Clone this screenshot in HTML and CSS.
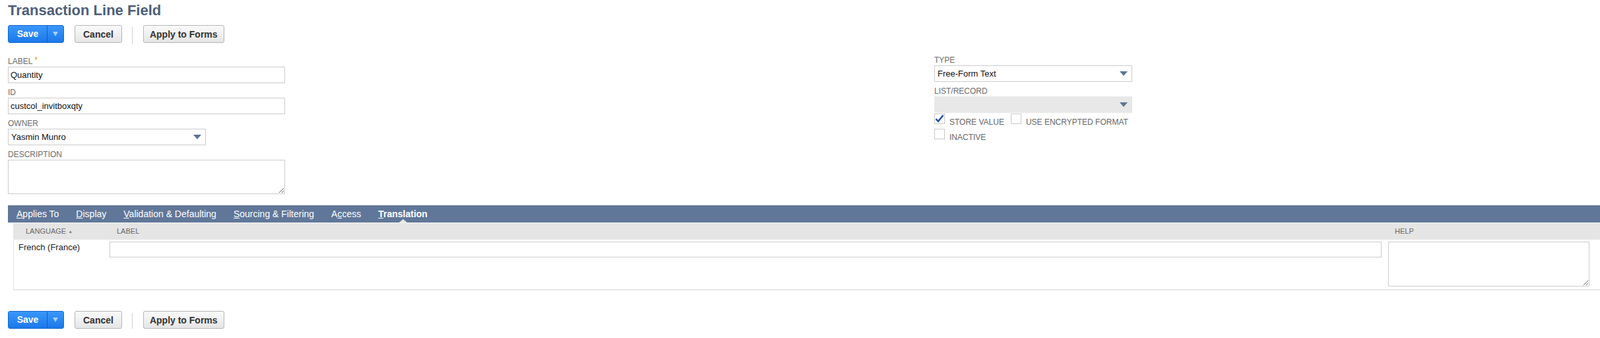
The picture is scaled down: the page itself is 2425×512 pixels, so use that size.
FILE: index.html
```html
<!DOCTYPE html>
<html lang="en">
<head>
  <meta charset="UTF-8">
  <title>Transaction Line Field</title>
  <link rel="stylesheet" href="styles.css">
</head>
<body>
  <div class="page">
    <h1 class="title">Transaction Line Field</h1>

    <div class="actions">
      <div class="btn-save">
        <span class="save-main">Save</span>
        <span class="save-menu"><i class="tri-light"></i></span>
      </div>
      <button class="btn">Cancel</button>
      <span class="sep"></span>
      <button class="btn btn-wide">Apply to Forms</button>
    </div>

    <div class="form">
      <div class="col col-left">
        <div class="field">
          <label>LABEL <span class="req">*</span></label>
          <input type="text" class="text-input wide" value="Quantity">
        </div>
        <div class="field">
          <label>ID</label>
          <input type="text" class="text-input wide" value="custcol_invitboxqty">
        </div>
        <div class="field">
          <label>OWNER</label>
          <div class="select narrow"><span>Yasmin Munro</span><i class="tri"></i></div>
        </div>
        <div class="field">
          <label>DESCRIPTION</label>
          <textarea class="text-area wide"></textarea>
        </div>
      </div>

      <div class="col col-right">
        <div class="field">
          <label>TYPE</label>
          <div class="select narrow"><span>Free-Form Text</span><i class="tri"></i></div>
        </div>
        <div class="field field-tight">
          <label>LIST/RECORD</label>
          <div class="select narrow disabled"><span></span><i class="tri"></i></div>
        </div>
        <div class="check-row">
          <span class="box">
            <svg width="16" height="16" viewBox="0 0 16 16"><path d="M2.5 8.2 L6 11.8 L13.5 2.5" fill="none" stroke="#22559a" stroke-width="2.6"/></svg>
          </span>
          <span class="check-text">STORE VALUE</span>
          <span class="box box-gap"></span>
          <span class="check-text">USE ENCRYPTED FORMAT</span>
        </div>
        <div class="check-row second">
          <span class="box"></span>
          <span class="check-text">INACTIVE</span>
        </div>
      </div>
    </div>

    <div class="tabs">
      <span class="tab"><u>A</u>pplies To</span>
      <span class="tab"><u>D</u>isplay</span>
      <span class="tab"><u>V</u>alidation &amp; Defaulting</span>
      <span class="tab"><u>S</u>ourcing &amp; Filtering</span>
      <span class="tab">A<u>c</u>cess</span>
      <span class="tab active"><u>T</u>ranslation</span>
    </div>

    <div class="sublist">
      <div class="grid head">
        <div class="h-lang">LANGUAGE <span class="sort">&#9650;</span></div>
        <div class="h-label">LABEL</div>
        <div class="h-help">HELP</div>
      </div>
      <div class="grid row">
        <div class="lang">French (France)</div>
        <input type="text" class="text-input cell-input">
        <textarea class="text-area cell-area"></textarea>
      </div>
    </div>

    <div class="actions actions-bottom">
      <div class="btn-save">
        <span class="save-main">Save</span>
        <span class="save-menu"><i class="tri-light"></i></span>
      </div>
      <button class="btn">Cancel</button>
      <span class="sep"></span>
      <button class="btn btn-wide">Apply to Forms</button>
    </div>
  </div>
</body>
</html>
```

FILE: styles.css
```css
body {
  margin: 0;
  font-family: "Liberation Sans", Arial, sans-serif;
  background-color: #fff;
  color: #222;
}
.page {
  padding-left: 12px;
}
.title {
  margin: 0;
  padding-top: 3px;
  font-size: 22px;
  line-height: 26px;
  font-weight: bold;
  color: #4d5f79;
}

/* buttons */
.actions {
  display: flex;
  align-items: center;
  margin-top: 9px;
  height: 27px;
}
.actions-bottom {
  margin-top: 31px;
}
.btn-save {
  display: flex;
  height: 27px;
  box-sizing: border-box;
  border: 1px solid #1467cc;
  border-radius: 3px;
  background: linear-gradient(#3a97fa, #1b78ea);
  color: #fff;
  font-weight: bold;
  font-size: 14px;
}
.save-main {
  width: 58px;
  line-height: 25px;
  text-align: center;
  border-right: 1px solid #1462c2;
}
.save-menu {
  width: 24px;
  display: flex;
  align-items: center;
  justify-content: center;
}
.tri-light {
  width: 0;
  height: 0;
  border-left: 4px solid transparent;
  border-right: 4px solid transparent;
  border-top: 7px solid #a9cdf7;
}
.btn {
  height: 27px;
  margin-left: 16px;
  padding: 0 12px;
  font-family: inherit;
  font-size: 14px;
  font-weight: bold;
  color: #333;
  background: linear-gradient(#fafafa, #e5e5e5);
  border: 1px solid #b5b5b5;
  border-radius: 3px;
}
.btn-wide {
  margin-left: 16px;
  padding: 0 9px;
}
.sep {
  width: 1px;
  height: 25px;
  margin-left: 15px;
  margin-top: 3px;
  background-color: #cfcfcf;
}

/* main form */
.form {
  display: flex;
  margin-top: 19px;
}
.col-left {
  width: 1404px;
  padding-top: 2px;
}
.field {
  margin-bottom: 7px;
}
.col-left .field:last-child {
  margin-bottom: 0;
}
.field-tight {
  margin-bottom: 1px;
}
.field label {
  display: block;
  font-size: 12px;
  line-height: 14px;
  color: #6b6b6b;
  margin-bottom: 1px;
}
.req {
  color: #d9962a;
  position: relative;
  top: -2px;
}
.text-input {
  display: block;
  box-sizing: border-box;
  height: 25px;
  border: 1px solid #cccccc;
  padding: 0 3px;
  font-family: inherit;
  font-size: 13px;
  color: #111;
  outline: none;
}
.wide {
  width: 420px;
}
.text-area {
  display: block;
  box-sizing: border-box;
  border: 1px solid #cccccc;
  font-family: inherit;
  font-size: 13px;
  outline: none;
  margin: 0;
}
.col-left .text-area {
  height: 52px;
}
.select {
  box-sizing: border-box;
  height: 25px;
  border: 1px solid #cccccc;
  display: flex;
  align-items: center;
  justify-content: space-between;
  padding: 0 6px 0 4px;
  font-size: 13px;
  color: #111;
}
.narrow {
  width: 300px;
}
.select.disabled {
  background-color: #e8e8e8;
  border-color: #e8e8e8;
}
.tri {
  width: 0;
  height: 0;
  border-left: 6px solid transparent;
  border-right: 6px solid transparent;
  border-top: 7px solid #5c7697;
}

/* checkboxes */
.check-row {
  display: flex;
  align-items: flex-start;
  height: 17px;
}
.check-row.second {
  margin-top: 6px;
}
.box {
  width: 16px;
  height: 16px;
  box-sizing: border-box;
  border: 1px solid #c9c9c9;
  background: #fff;
  position: relative;
}
.box svg {
  position: absolute;
  left: -1px;
  top: -1px;
}
.box-gap {
  margin-left: 10px;
}
.check-text {
  padding-top: 6px;
  padding-left: 7px;
  font-size: 12px;
  line-height: 14px;
  color: #666;
}

/* tabs */
.tabs {
  display: flex;
  margin-top: 17px;
  height: 26px;
  background-color: #607799;
  border-bottom: 1px solid #f2f2f2;
}
.tab {
  position: relative;
  padding: 0 13px;
  line-height: 26px;
  font-size: 14px;
  color: #fff;
}
.tab.active {
  font-weight: bold;
}
.tab.active::after {
  content: "";
  position: absolute;
  left: 50%;
  bottom: 0;
  margin-left: -6px;
  border-left: 6px solid transparent;
  border-right: 6px solid transparent;
  border-bottom: 5px solid #e8e8e8;
}

/* sublist */
.sublist {
  margin-left: 8px;
  border-left: 1px solid #e3e3e3;
  border-bottom: 2px solid #e8e8e8;
}
.grid {
  display: grid;
  grid-template-columns: 135px 1fr 305px;
  column-gap: 10px;
  padding-right: 16px;
}
.head {
  height: 25px;
  background-color: #e5e5e5;
  font-size: 11px;
  line-height: 25px;
  color: #666;
}
.h-lang {
  padding-left: 18px;
}
.h-label {
  padding-left: 11px;
}
.h-help {
  padding-left: 10px;
}
.sort {
  font-size: 7px;
  color: #888;
  position: relative;
  top: -1px;
}
.row {
  padding-top: 3px;
  padding-bottom: 4px;
}
.lang {
  padding-left: 7px;
  padding-top: 1px;
  font-size: 13px;
  line-height: 16px;
  color: #222;
}
.cell-input {
  width: 100%;
  height: 24px;
}
.cell-area {
  width: 305px;
  height: 68px;
}
```
